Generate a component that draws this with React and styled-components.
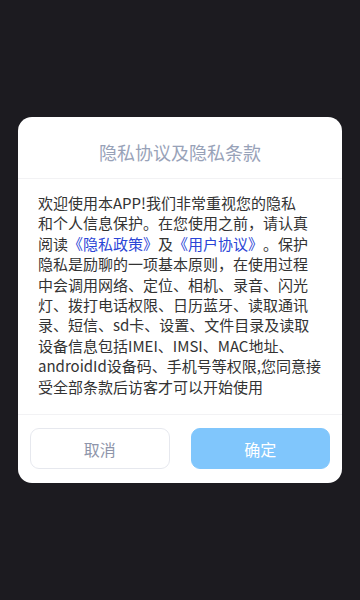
import React from "react";
import styled, { createGlobalStyle } from "styled-components";

const GlobalStyle = createGlobalStyle`
    html, body {
        margin: 0;
        padding: 0;
        background: #1c1b20;
        font-family: "Noto Sans CJK SC", "Noto Sans", sans-serif;
        text-spacing-trim: space-all;
    }
`;

const lines = [
    "欢迎使用本APP!我们非常重视您的隐私",
    "和个人信息保护。在您使用之前，请认真",
    null,
    "隐私是励聊的一项基本原则，在使用过程",
    "中会调用网络、定位、相机、录音、闪光",
    "灯、拨打电话权限、日历蓝牙、读取通讯",
    "录、短信、sd卡、设置、文件目录及读取",
    "设备信息包括IMEI、IMSI、MAC地址、",
    "androidId设备码、手机号等权限,您同意接",
    "受全部条款后访客才可以开始使用",
];

const App = () => {
    return (
        <React.Fragment>
            <GlobalStyle />
            <Screen>
                <Dialog>
                    <Title>隐私协议及隐私条款</Title>
                    <Body>
                        {lines.map((line, i) =>
                            line === null ? (
                                <Line key={i}>
                                    阅读<Link>《隐私政策》</Link>及<Link>《用户协议》</Link>。保护
                                </Line>
                            ) : (
                                <Line key={i}>{line}</Line>
                            )
                        )}
                    </Body>
                    <Footer>
                        <Button>取消</Button>
                        <Button $primary>确定</Button>
                    </Footer>
                </Dialog>
            </Screen>
        </React.Fragment>
    );
};

const Screen = styled.div`
    display: flex;
    align-items: center;
    justify-content: center;
    min-height: 600px;
`;

const Dialog = styled.div`
    width: 324px;
    background: #ffffff;
    border-radius: 14px;
    overflow: hidden;
`;

const Title = styled.div`
    padding: 23px 0 14px;
    font-size: 18px;
    line-height: 24px;
    color: #98a2b8;
    text-align: center;
    border-bottom: 1px solid #f2f2f4;
`;

const Body = styled.div`
    padding: 14px 20px 17px;
    font-size: 15px;
    line-height: 20.4px;
    color: #333333;
    border-bottom: 1px solid #f2f2f4;
    text-spacing-trim: space-all;
`;

const Line = styled.div`
    white-space: nowrap;
`;

const Link = styled.span`
    color: #2b45d6;
`;

const Footer = styled.div`
    display: flex;
    gap: 21px;
    padding: 13px 12px 14px;
`;

const Button = styled.button`
    flex: 1;
    height: 41px;
    border-radius: 9px;
    font-family: inherit;
    font-size: 16px;
    border: 1px solid ${({ $primary }) => ($primary ? "#80c6fc" : "#e6e8ee")};
    background: ${({ $primary }) => ($primary ? "#80c6fc" : "#ffffff")};
    color: ${({ $primary }) => ($primary ? "#ffffff" : "#8e95aa")};
    padding: 0;
`;

export default App;
